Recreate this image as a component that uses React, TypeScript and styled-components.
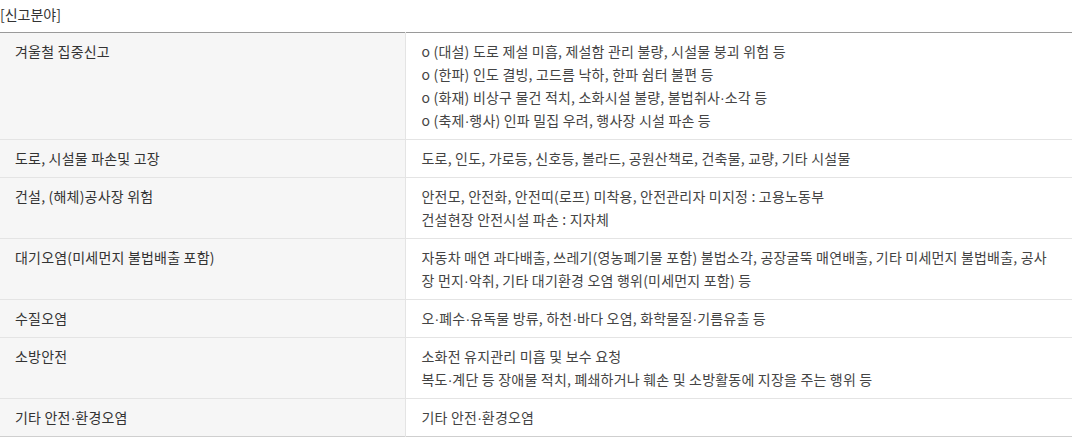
import React from "react";
import styled, { createGlobalStyle } from "styled-components";

const Global = createGlobalStyle`
  html, body { margin: 0; padding: 0; background: #fff; }
  body { font-family: "Noto Sans CJK KR", "Noto Sans", sans-serif; color: #333; }
`;

const Wrap = styled.div`
  width: 1072px;
`;

const Title = styled.h4`
  margin: 0;
  height: 32px;
  display: flex;
  align-items: center;
  padding-bottom: 4px;
  box-sizing: border-box;
  font-size: 14px;
  font-weight: 400;
  color: #333;
`;

const Table = styled.table`
  width: 100%;
  border-collapse: collapse;
  border-top: 1px solid #9a9a9a;
  border-bottom: 1px solid #cfcfcf;
  table-layout: fixed;
  font-size: 14px;
  letter-spacing: 0.2px;
`;

const Row = styled.tr`
  & + & { border-top: 1px solid #e4e4e4; }
`;

const Head = styled.th`
  box-sizing: border-box;
  width: 405px;
  background: #f6f6f6;
  border-right: 1px solid #e4e4e4;
  text-align: left;
  vertical-align: top;
  font-weight: 400;
  padding: 7px 15px;
  line-height: 23px;
  color: #333;
`;

const Cell = styled.td`
  vertical-align: top;
  padding: 7px 16px;
  line-height: 23px;
  color: #444;
  word-break: break-all;
`;

const Line = styled.div``;

const Dot = styled.span`
  font-family: "Liberation Sans", sans-serif;
  letter-spacing: 0;
  line-height: 1;
`;

function withDots(text: string) {
  const parts = text.split("·");
  return parts.map((p, i) => (
    <React.Fragment key={i}>
      {i > 0 && <Dot>·</Dot>}
      {p}
    </React.Fragment>
  ));
}

const rows: { head: string; lines: string[] }[] = [
  {
    head: "겨울철 집중신고",
    lines: [
      "o (대설) 도로 제설 미흡, 제설함 관리 불량, 시설물 붕괴 위험 등",
      "o (한파) 인도 결빙, 고드름 낙하, 한파 쉼터 불편 등",
      "o (화재) 비상구 물건 적치, 소화시설 불량, 불법취사·소각 등",
      "o (축제·행사) 인파 밀집 우려, 행사장 시설 파손 등",
    ],
  },
  { head: "도로, 시설물 파손및 고장", lines: ["도로, 인도, 가로등, 신호등, 볼라드, 공원산책로, 건축물, 교량, 기타 시설물"] },
  {
    head: "건설, (해체)공사장 위험",
    lines: ["안전모, 안전화, 안전띠(로프) 미착용, 안전관리자 미지정 : 고용노동부", "건설현장 안전시설 파손 : 지자체"],
  },
  {
    head: "대기오염(미세먼지 불법배출 포함)",
    lines: [
      "자동차 매연 과다배출, 쓰레기(영농폐기물 포함) 불법소각, 공장굴뚝 매연배출, 기타 미세먼지 불법배출, 공사장 먼지·악취, 기타 대기환경 오염 행위(미세먼지 포함) 등",
    ],
  },
  { head: "수질오염", lines: ["오·폐수·유독물 방류, 하천·바다 오염, 화학물질·기름유출 등"] },
  {
    head: "소방안전",
    lines: ["소화전 유지관리 미흡 및 보수 요청", "복도·계단 등 장애물 적치, 폐쇄하거나 훼손 및 소방활동에 지장을 주는 행위 등"],
  },
  { head: "기타 안전·환경오염", lines: ["기타 안전·환경오염"] },
];

export default function App() {
  return (
    <Wrap>
      <Global />
      <Title>[신고분야]</Title>
      <Table>
        <tbody>
          {rows.map((r) => (
            <Row key={r.head}>
              <Head scope="row">{withDots(r.head)}</Head>
              <Cell>
                {r.lines.map((l) => (
                  <Line key={l}>{withDots(l)}</Line>
                ))}
              </Cell>
            </Row>
          ))}
        </tbody>
      </Table>
    </Wrap>
  );
}
